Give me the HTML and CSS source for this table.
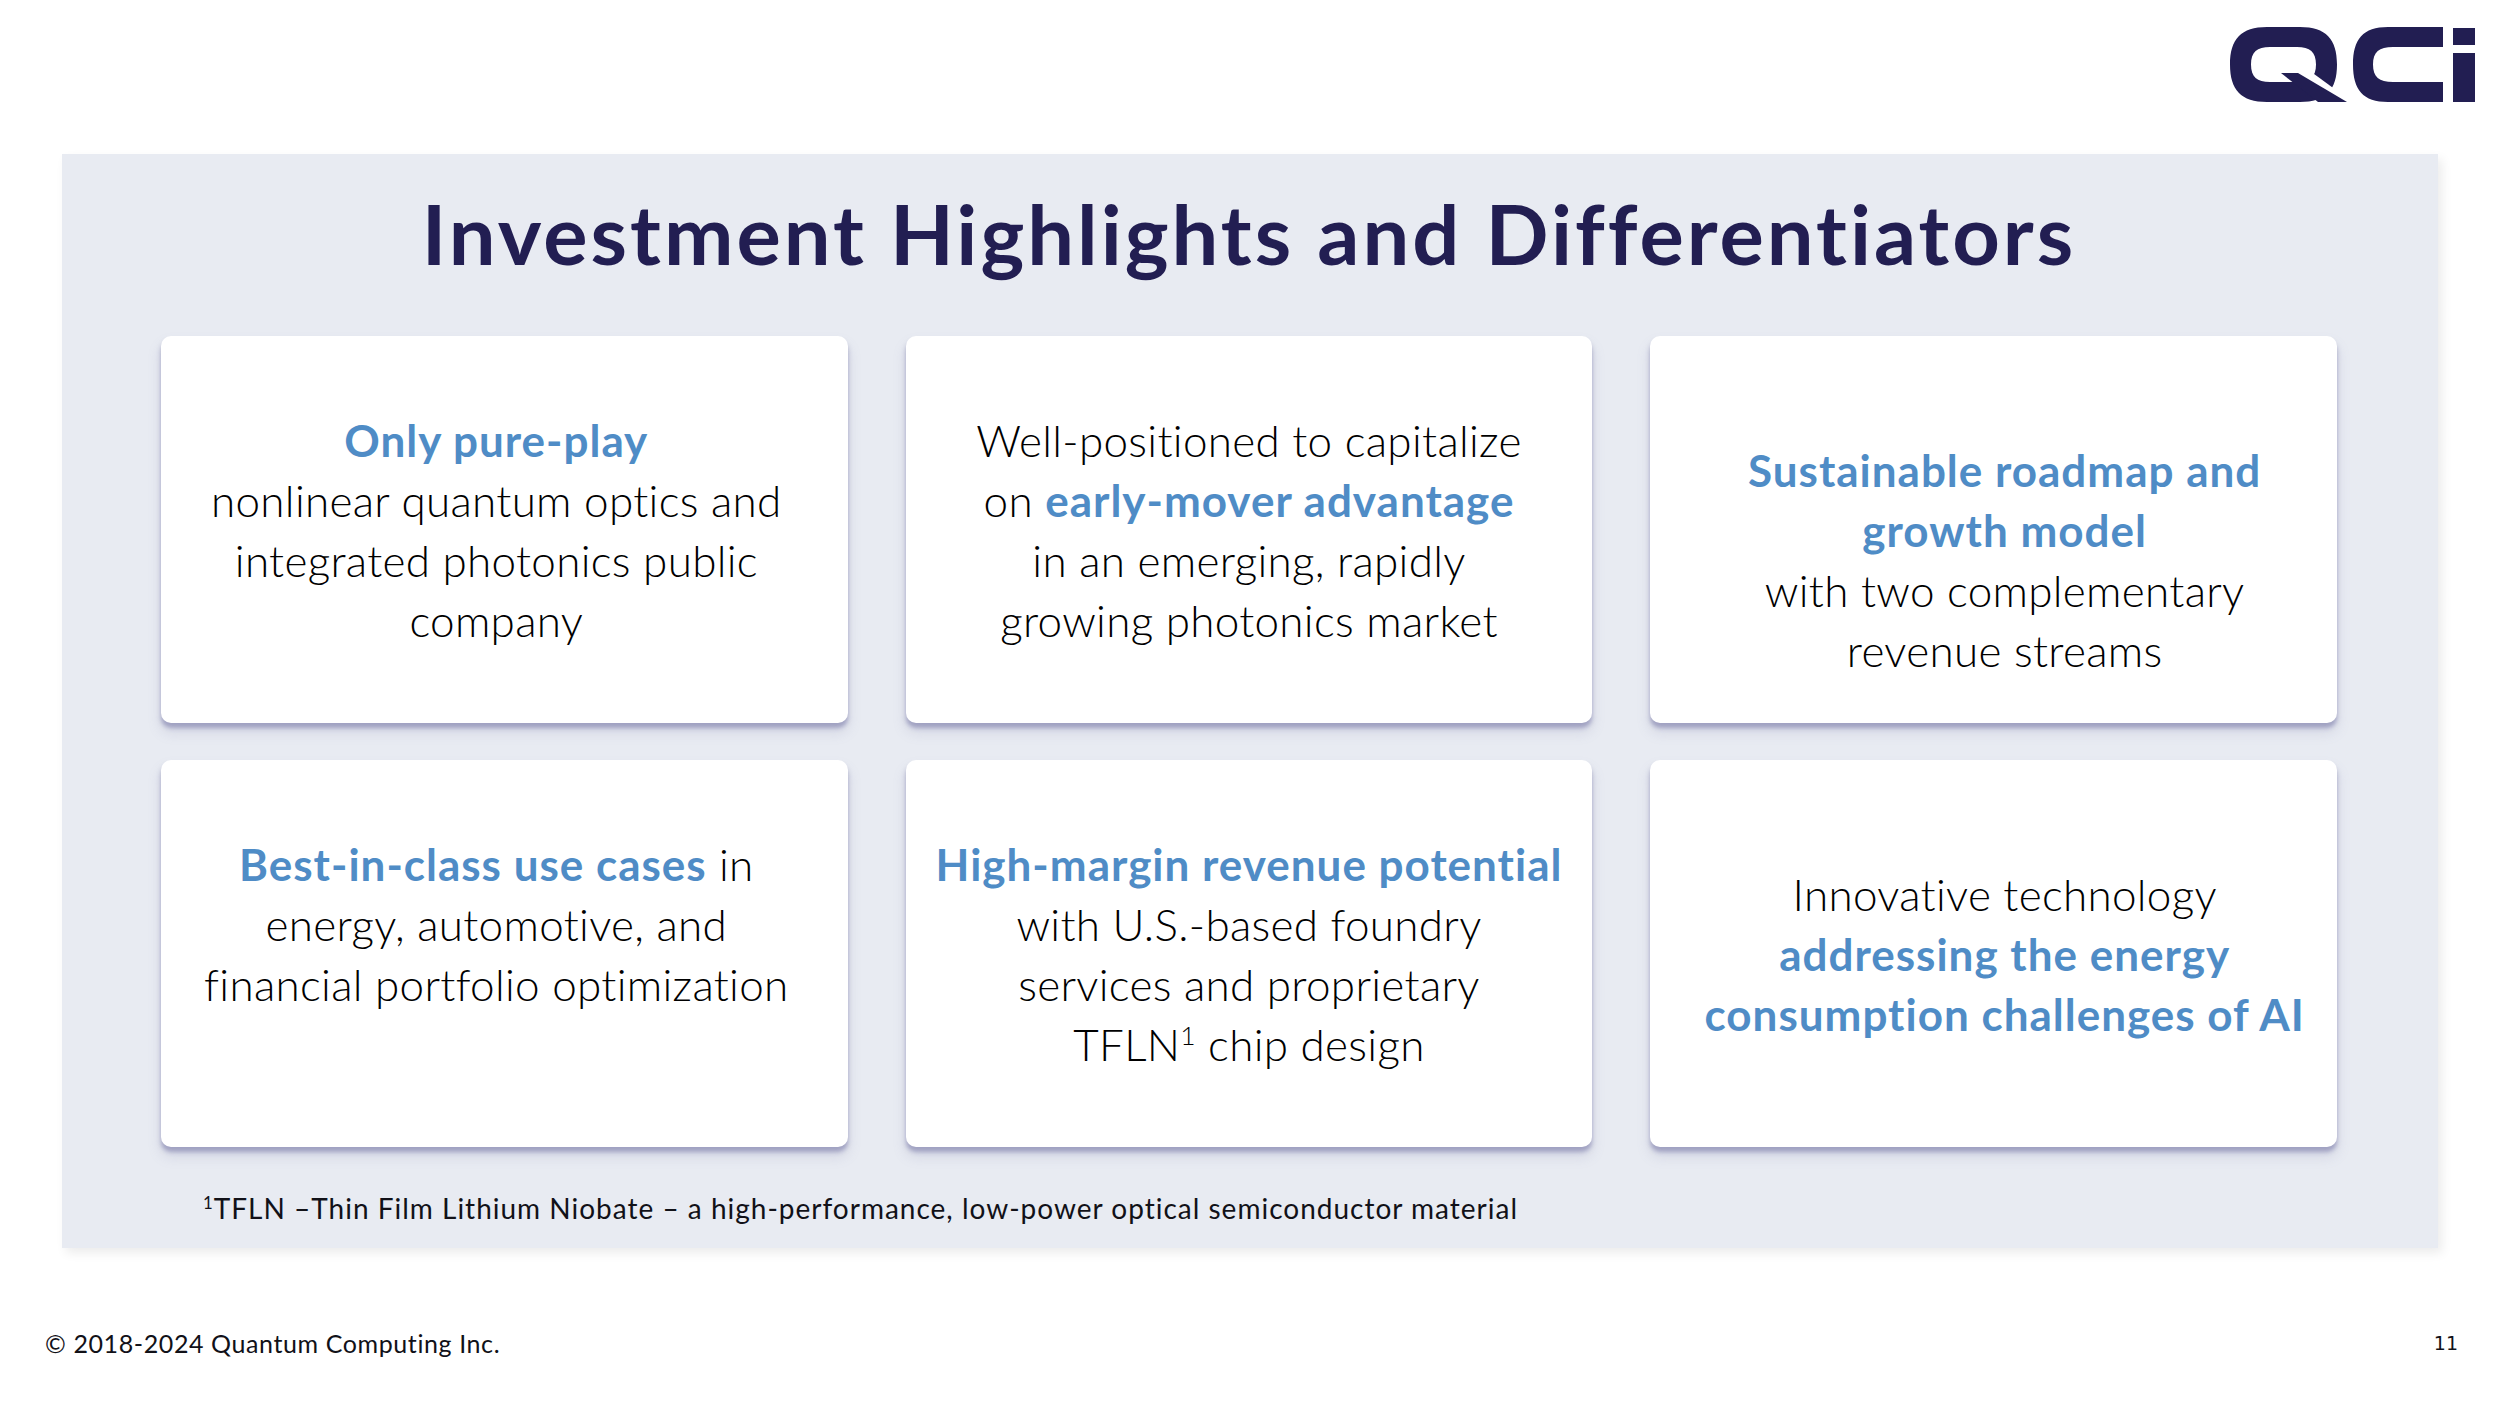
FILE: index.html
```html
<!DOCTYPE html>
<html lang="en">
<head>
<meta charset="utf-8">
<title>Investment Highlights and Differentiators</title>
<link rel="stylesheet" href="styles.css">
</head>
<body>
<div class="slide">
  <header class="header">
    <svg class="logo" viewBox="0 0 245 75" width="245" height="75" aria-label="QCi">
      <path fill="#221E52" fill-rule="evenodd" d="M38 0 H70 C96 0 107 12 107 37.5 C107 63 96 75 70 75 H37 C11 75 0 63 0 37.5 C0 12 11 0 37 0 Z M40 20 H67 C80 20 86 25 86 37.5 C86 50 80 55 67 55 H40 C27 55 21 50 21 37.5 C21 25 27 20 40 20 Z"/>
      <polygon fill="#ffffff" points="66,44 80,44 125,77 110,77"/>
      <polygon fill="#221E52" points="51,46 68,46 117,75 88,75"/>
      <path fill="#221E52" d="M213 0 H158 C133 0 123 12 123 37.5 C123 63 133 75 158 75 H213 V55 H163 C149 55 143 50 143 37.5 C143 25 149 20 163 20 H213 Z"/>
      <rect fill="#221E52" x="223" y="1" width="22" height="17"/>
      <rect fill="#221E52" x="223" y="26" width="22" height="49"/>
    </svg>
  </header>

  <main class="panel">
    <h1 class="title">Investment Highlights and Differentiators</h1>
    <div class="grid">
      <div class="card card--left">
        <p class="card-text"><span class="hl">Only pure-play</span><br>nonlinear quantum optics and<br>integrated photonics public<br>company</p>
      </div>
      <div class="card">
        <p class="card-text">Well-positioned to capitalize<br>on <span class="hl">early-mover advantage</span><br>in an emerging, rapidly<br>growing photonics market</p>
      </div>
      <div class="card card--right card--low">
        <p class="card-text"><span class="hl">Sustainable roadmap and<br>growth model</span><br>with two complementary<br>revenue streams</p>
      </div>
      <div class="card card--left card--high">
        <p class="card-text"><span class="hl">Best-in-class use cases</span> in<br>energy, automotive, and<br>financial portfolio optimization</p>
      </div>
      <div class="card">
        <p class="card-text"><span class="hl">High-margin revenue potential</span><br>with U.S.-based foundry<br>services and proprietary<br>TFLN<sup class="sup">1</sup> chip design</p>
      </div>
      <div class="card card--right">
        <p class="card-text">Innovative technology<br><span class="hl">addressing the energy<br>consumption challenges of AI</span></p>
      </div>
    </div>
    <p class="footnote"><sup class="sup">1</sup>TFLN –Thin Film Lithium Niobate – a high-performance, low-power optical semiconductor material</p>
  </main>

  <footer class="footer">
    <span class="copyright">© 2018-2024 Quantum Computing Inc.</span>
    <span class="page">11</span>
  </footer>
</div>
</body>
</html>
```

FILE: styles.css
```css
* { box-sizing: border-box; }

html, body {
  margin: 0;
  padding: 0;
  background: #ffffff;
}

body {
  font-family: Lato, "Open Sans", sans-serif;
  font-weight: 400;
  color: #111118;
}

.slide {
  width: 2500px;
  height: 1406px;
  display: flex;
  flex-direction: column;
}

.header {
  height: 154px;
  display: flex;
  justify-content: flex-end;
  align-items: flex-start;
  padding: 27px 25px 0 0;
}

.logo { display: block; }

.panel {
  width: 2376px;
  height: 1094px;
  margin-left: 62px;
  background: #E8EBF2;
  box-shadow: 4px 5px 10px rgba(0, 0, 0, 0.08);
  padding: 38px 101px 0 99px;
  display: flex;
  flex-direction: column;
}

.title {
  margin: 0;
  font-size: 83px;
  line-height: 83px;
  font-weight: 700;
  color: #221E52;
  text-align: center;
  letter-spacing: 3px;
}

.grid {
  margin-top: 61px;
  display: grid;
  grid-template-columns: repeat(3, 1fr);
  grid-template-rows: 387px 387px;
  column-gap: 58px;
  row-gap: 37px;
}

.card {
  background: #ffffff;
  border-radius: 10px;
  box-shadow: 0 5px 4px rgba(110, 110, 160, 0.5), 0 9px 14px rgba(110, 110, 160, 0.18);
  display: flex;
  align-items: center;
  justify-content: center;
}

.card--left { padding-right: 16px; }
.card--right { padding-left: 22px; }
.card--low { padding-top: 60px; }
.card--high { padding-bottom: 60px; }

.card-text {
  margin: 0;
  font-size: 44px;
  line-height: 60px;
  text-align: center;
  font-weight: 300;
  color: #000000;
  letter-spacing: 0.3px;
}

.hl {
  color: #4F8CC6;
  font-weight: 700;
  letter-spacing: 1px;
}

.sup {
  font-size: 0.6em;
  line-height: 0;
  vertical-align: 0.6em;
}

.footnote {
  margin: 44px 0 0 42px;
  font-size: 28px;
  line-height: 35px;
  letter-spacing: 1px;
}

.footer {
  margin-top: 80px;
  display: flex;
  justify-content: space-between;
  align-items: center;
  height: 30px;
  padding: 0 42px 0 45px;
}

.copyright {
  font-size: 25px;
  line-height: 30px;
  letter-spacing: 0.6px;
}

.page {
  font-family: "DejaVu Sans", sans-serif;
  font-size: 19px;
  line-height: 30px;
}
```
